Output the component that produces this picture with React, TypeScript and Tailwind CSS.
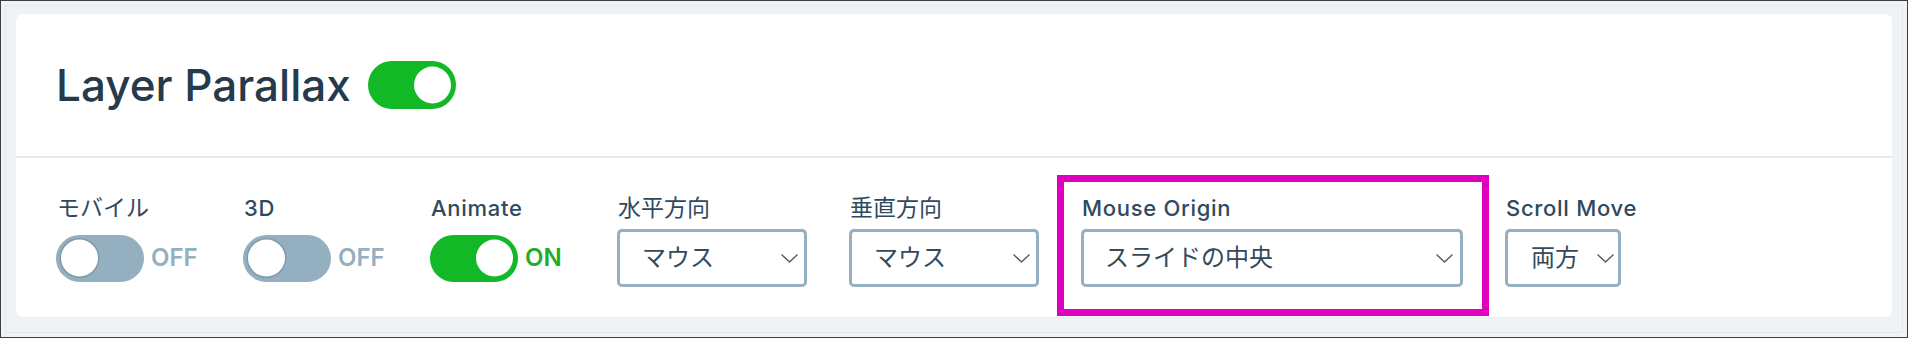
import React from "react";

const FONT = 'Inter, "Noto Sans CJK JP", sans-serif';

function Toggle({ on, big = false }: { on: boolean; big?: boolean }) {
  return (
    <div
      className={`relative w-[88px] ${big ? "h-[48px]" : "h-[47px]"} rounded-full ${
        on ? "bg-[#12b826]" : "bg-[#94afc0]"
      } shrink-0`}
    >
      <div
        className={`absolute top-1/2 -translate-y-1/2 w-[37px] h-[37px] rounded-full bg-white ${
          on ? "right-[5px]" : "left-[5px] shadow-[0_0_0_1.5px_#7f9bad]"
        }`}
      />
    </div>
  );
}

function Chevron() {
  return (
    <svg width="17" height="9" viewBox="0 0 17 9" fill="none" className="shrink-0">
      <path d="M1 1 L8.5 8 L16 1" stroke="#4f5f6c" strokeWidth="1.5" strokeLinecap="round" strokeLinejoin="round" />
    </svg>
  );
}

function Select({ value, width, pl = 25, pr = 9 }: { value: string; width: number; pl?: number; pr?: number }) {
  return (
    <div
      className="h-[58px] flex items-center justify-between border-[3px] border-[#94afc0] rounded-[5px] bg-white text-[24px] text-[#34495a]"
      style={{ width, paddingLeft: pl - 3, paddingRight: pr - 3 }}
    >
      <span className="leading-none">{value}</span>
      <Chevron />
    </div>
  );
}

function Field({ label, jp = false, children, className = "" }: { label: string; jp?: boolean; children: React.ReactNode; className?: string }) {
  return (
    <div className={`flex flex-col ${className}`}>
      <div
        className={`h-[30px] leading-[30px] text-[#2f4a5e] mb-[6px] pl-[1px] ${
          jp ? "font-normal text-[23px]" : "font-medium text-[22px] tracking-[0.7px]"
        }`}
      >
        {label}
      </div>
      <div className="h-[58px] flex items-center">{children}</div>
    </div>
  );
}

function ToggleField({ label, on, jp = false }: { label: string; on: boolean; jp?: boolean }) {
  return (
    <Field label={label} jp={jp}>
      <div className="flex items-center">
        <Toggle on={on} />
        <span
          className={`ml-[7px] w-[50px] text-[24px] font-semibold leading-none ${
            on ? "text-[#1fae2a]" : "text-[#94afc0]"
          }`}
        >
          {on ? "ON" : "OFF"}
        </span>
      </div>
    </Field>
  );
}

export default function App() {
  return (
    <div className="w-full h-[338px] border border-[#3b3f42] bg-[#eff3f6] p-[4px]" style={{ fontFamily: FONT }}>
      <div className="h-full border border-[#e3e8ec] pt-[8px] px-[10px] pb-[11px]">
        <div className="bg-white rounded-[6px] shadow-[0_0_2px_rgba(0,0,0,0.06)]">
          <div className="h-[144px] flex items-center pl-[40px] border-b-2 border-[#e6e9ec]">
            <h1 className="text-[44px] font-medium text-[#253a4b] leading-none">Layer Parallax</h1>
            <div className="ml-[17px]">
              <Toggle on big />
            </div>
          </div>
          <div className="pt-[35px] pb-[30px] pl-[40px] flex gap-[42px]">
            <ToggleField label="モバイル" on={false} jp />
            <ToggleField label="3D" on={false} />
            <ToggleField label="Animate" on />
            <Field label="水平方向" jp>
              <Select value="マウス" width={190} />
            </Field>
            <Field label="垂直方向" jp>
              <Select value="マウス" width={190} />
            </Field>
            <Field label="Mouse Origin" className="relative">
              <Select value="スライドの中央" width={382} pl={24} pr={10} />
              <div className="pointer-events-none absolute left-[-24px] top-[-18px] w-[432px] h-[141px] border-[7px] border-[#e000c0]" />
            </Field>
            <Field label="Scroll Move">
              <Select value="両方" width={116} pl={26} pr={7} />
            </Field>
          </div>
        </div>
      </div>
    </div>
  );
}
